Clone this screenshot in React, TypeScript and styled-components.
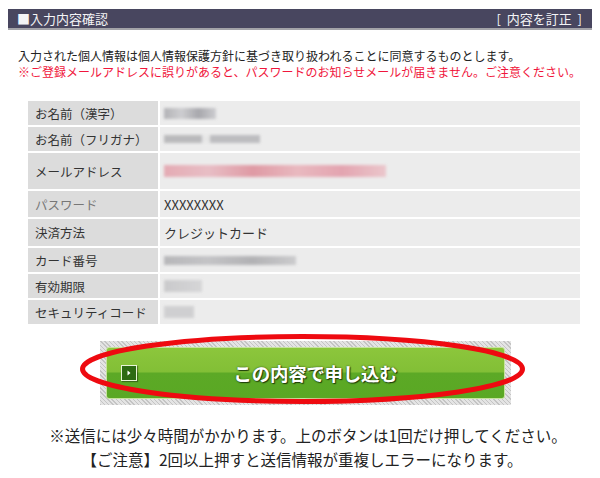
import * as React from 'react';
import styled, { createGlobalStyle } from 'styled-components';

const GlobalStyle = createGlobalStyle`
  html, body {
    margin: 0;
    padding: 0;
    background: #fff;
  }
  body {
    font-family: "Noto Sans CJK JP", "Noto Sans", sans-serif;
    color: #333;
  }
`;

const Page = styled.div`
  width: 600px;
  height: 478px;
  padding: 9px 8px 0 8px;
  box-sizing: border-box;
  overflow: hidden;
`;

const HeaderBar = styled.div`
  display: flex;
  justify-content: space-between;
  align-items: center;
  height: 19px;
  padding: 0 10px 0 9px;
  background: #48465f;
  border-bottom: 2px solid #a3a3a8;
  color: #f4f4f6;
  font-size: 13px;
  line-height: 19px;
  white-space: pre;
`;

const Notice = styled.div`
  margin: 18px 0 0 10px;
  font-size: 12px;
  line-height: 16px;
`;

const NoticeLine = styled.div<{ $warn?: boolean }>`
  color: ${(p) => (p.$warn ? '#f0163c' : '#222')};
  white-space: nowrap;
`;

const InfoGrid = styled.div`
  display: grid;
  grid-template-columns: 130px 420px;
  gap: 2px;
  margin: 21px 0 0 20px;
`;

const LabelCell = styled.div<{ $h: number; $dim?: boolean }>`
  height: ${(p) => p.$h}px;
  display: flex;
  align-items: center;
  padding-left: 7px;
  background: #dcdcdc;
  color: ${(p) => (p.$dim ? '#777' : '#333')};
  font-size: 12.5px;
  white-space: nowrap;
`;

const ValueCell = styled.div<{ $h: number }>`
  height: ${(p) => p.$h}px;
  display: flex;
  align-items: center;
  padding-left: 4px;
  background: #ececec;
  color: #333;
  font-size: 13px;
`;

const Masked = styled.span<{ $w: number; $h: number; $tone: string }>`
  display: inline-block;
  width: ${(p) => p.$w}px;
  height: ${(p) => p.$h}px;
  background: ${(p) => p.$tone};
  filter: blur(1.6px);
  opacity: 0.85;
`;

const SubmitArea = styled.div`
  position: relative;
  display: flex;
  flex-direction: column;
  align-items: center;
  margin-top: 17px;
`;

const ButtonFrame = styled.div`
  width: 411px;
  height: 64px;
  box-sizing: border-box;
  padding: 6px;
  margin-left: 11px;
  background: repeating-linear-gradient(45deg, #c4c4c4 0 1px, #e4e4e4 1px 3px);
`;

const GreenButton = styled.button`
  display: flex;
  align-items: center;
  width: 100%;
  height: 100%;
  padding: 0 10px 0 14px;
  border: 1px solid #c6e39c;
  border-radius: 3px;
  background: linear-gradient(to bottom, #8cc63c 0%, #82bf36 48%, #5ca926 50%, #5aa824 100%);
  cursor: pointer;
  font-family: inherit;
`;

const ArrowBox = styled.span`
  display: flex;
  align-items: center;
  justify-content: center;
  width: 14px;
  height: 14px;
  flex-shrink: 0;
  background: #2d6a13;
  border: 1px solid #e8f4d8;
  box-shadow: 1px 1px 1px rgba(0, 0, 0, 0.35);
`;

const ButtonText = styled.span`
  flex: 1;
  text-align: center;
  color: #fff;
  font-size: 18.5px;
  font-weight: 700;
  letter-spacing: -0.3px;
  text-shadow: 1px 1px 1px #1f3d0a, 0 0 2px #2a4f10;
`;

const Ellipse = styled.svg`
  position: absolute;
  left: 72px;
  top: -12px;
  pointer-events: none;
`;

const Caution = styled.div`
  margin-top: 18px;
  display: flex;
  flex-direction: column;
  align-items: center;
  font-size: 15.5px;
  line-height: 24px;
  color: #222;
  white-space: nowrap;
`;

const CautionLine = styled.div<{ $shift?: number }>`
  margin-left: ${(p) => p.$shift ?? 0}px;
`;

const rows: { label: string; h: number; dim?: boolean; value: React.ReactNode }[] = [
  { label: 'お名前（漢字）', h: 24, value: <Masked $w={52} $h={11} $tone="linear-gradient(90deg,#a9a9ad,#c9c9cc,#9c9ca2,#c8c8cc)" /> },
  { label: 'お名前（フリガナ）', h: 24, value: <Masked $w={96} $h={8} $tone="linear-gradient(90deg,#b1b1b4 0 40%,#e6e6e6 40% 48%,#b5b5b8 48% 100%)" /> },
  { label: 'メールアドレス', h: 36, value: <Masked $w={222} $h={12} $tone="linear-gradient(90deg,#e3a0aa,#e8b6bf,#dd8c98,#e9b0b8,#e298a6,#ebc0c6)" /> },
  { label: 'パスワード', h: 26, dim: true, value: <span>XXXXXXXX</span> },
  { label: '決済方法', h: 27, value: <span>クレジットカード</span> },
  { label: 'カード番号', h: 24, value: <Masked $w={132} $h={9} $tone="linear-gradient(90deg,#aeaeb1,#bdbdc0,#a8a8ab,#c6c6c8)" /> },
  { label: '有効期限', h: 24, value: <Masked $w={38} $h={12} $tone="linear-gradient(90deg,#c4c4c6,#d2d2d4)" /> },
  { label: 'セキュリティコード', h: 24, value: <Masked $w={30} $h={12} $tone="#cbcbcd" /> },
];

function ConfirmPage() {
  return (
    <Page>
      <HeaderBar>
        <span>■入力内容確認</span>
        <span>{'[  内容を訂正  ]'}</span>
      </HeaderBar>

      <Notice>
        <NoticeLine>入力された個人情報は個人情報保護方針に基づき取り扱われることに同意するものとします。</NoticeLine>
        <NoticeLine $warn>※ご登録メールアドレスに誤りがあると、パスワードのお知らせメールが届きません。ご注意ください。</NoticeLine>
      </Notice>

      <InfoGrid>
        {rows.map((r) => (
          <React.Fragment key={r.label}>
            <LabelCell $h={r.h} $dim={r.dim}>
              {r.label}
            </LabelCell>
            <ValueCell $h={r.h}>{r.value}</ValueCell>
          </React.Fragment>
        ))}
      </InfoGrid>

      <SubmitArea>
        <ButtonFrame>
          <GreenButton type="button">
            <ArrowBox>
              <svg width="6" height="6" viewBox="0 0 6 6">
                <path d="M1.5 0.5 L4.5 3 L1.5 5.5 Z" fill="#fff" />
              </svg>
            </ArrowBox>
            <ButtonText>この内容で申し込む</ButtonText>
          </GreenButton>
        </ButtonFrame>
        <Ellipse width="456" height="80" viewBox="0 0 456 80">
          <ellipse cx="222.5" cy="40" rx="220" ry="32.5" fill="none" stroke="#ee0a10" strokeWidth="5" />
        </Ellipse>
        <Caution>
          <CautionLine $shift={16}>※送信には少々時間がかかります。上のボタンは1回だけ押してください。</CautionLine>
          <CautionLine $shift={4}>【ご注意】2回以上押すと送信情報が重複しエラーになります。</CautionLine>
        </Caution>
      </SubmitArea>
    </Page>
  );
}

export default function App() {
  return (
    <>
      <GlobalStyle />
      <ConfirmPage />
    </>
  );
}
